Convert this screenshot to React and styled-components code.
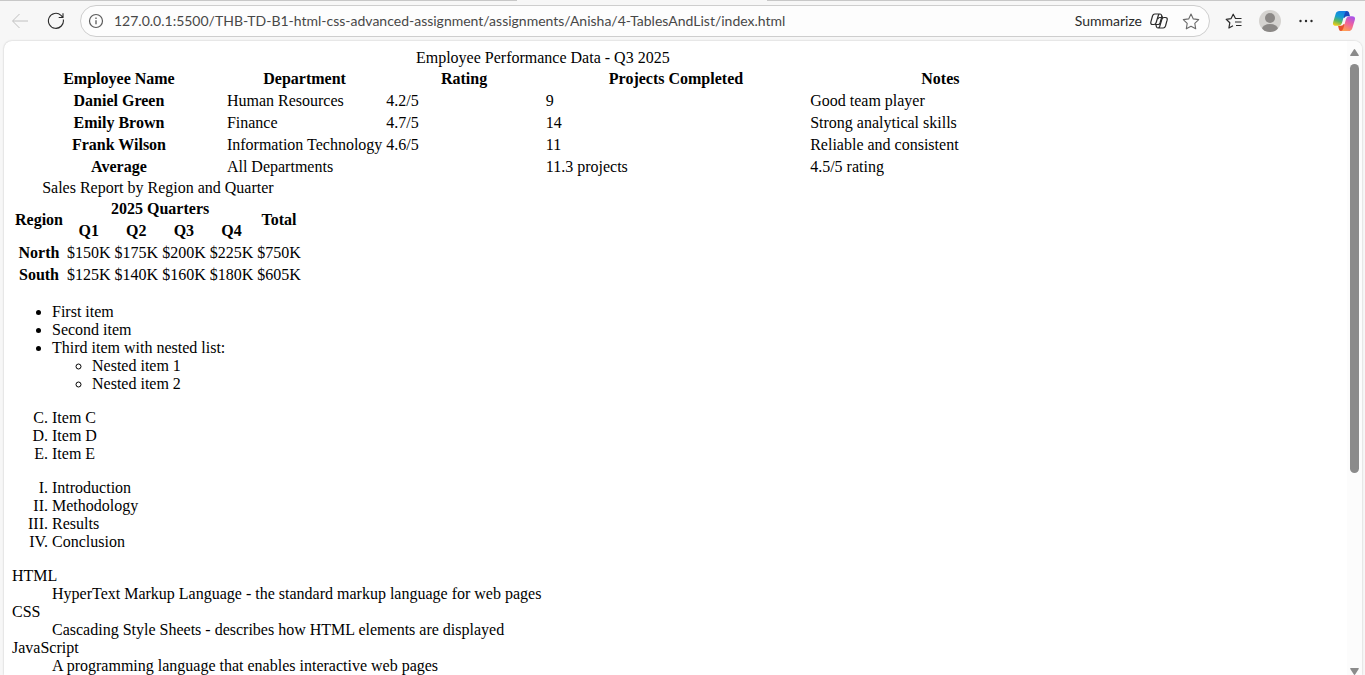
import React from "react";
import styled, { createGlobalStyle } from "styled-components";

const GlobalStyle = createGlobalStyle`
  * { box-sizing: border-box; }
  html, body, #root { height: 100%; }
  body { margin: 0; background: #f7f7f7; overflow: hidden; }
`;

const Browser = styled.div`
  display: flex;
  flex-direction: column;
  height: 100%;
`;

const TabEdge = styled.div`
  display: flex;
  gap: 250px;
  height: 1px;
  flex: none;
`;

const EdgeLine = styled.span`
  flex: ${(p) => p.$grow} 1 0;
  background: #c8c8c8;
`;

const Toolbar = styled.header`
  display: flex;
  align-items: center;
  height: 40px;
  flex: none;
  padding: 0 9px 0 10px;
`;

const IconButton = styled.button`
  display: grid;
  place-items: center;
  flex: none;
  width: ${(p) => p.$width || 20}px;
  height: 24px;
  margin: 0 ${(p) => p.$after || 0}px 0 0;
  padding: 0;
  border: 0;
  background: none;
  color: ${(p) => p.$color || "#2b2b2b"};
  svg { display: block; }
`;

const AddressBar = styled.div`
  display: flex;
  align-items: center;
  flex: 1;
  height: 32px;
  margin-right: 14px;
  padding: 0 8px 0 5px;
  border: 1px solid #cecece;
  border-radius: 16px;
  background: #fdfdfd;
`;

const AddressInput = styled.input`
  flex: 1;
  min-width: 0;
  padding: 0;
  border: 0;
  outline: 0;
  background: none;
  color: #484848;
  font: 14px/20px Lato, "Open Sans", sans-serif;
`;

const SummarizeButton = styled.button`
  display: flex;
  align-items: center;
  gap: 8px;
  margin-right: 13px;
  padding: 0;
  border: 0;
  background: none;
  color: #2b2b2b;
  font: 14px/20px Lato, "Open Sans", sans-serif;
`;

const Viewport = styled.div`
  display: flex;
  flex: 1;
  min-height: 0;
  margin: 0 3px 0 4px;
  border-radius: 8px 8px 0 0;
  background: #fff;
  box-shadow: 0 0 2px rgba(0, 0, 0, 0.24);
  overflow: hidden;
`;

const Page = styled.main`
  flex: 1;
  min-width: 0;
  padding: 8px;
  overflow: hidden;
  color: #000;
  font: 16px/18px "Liberation Serif", "Times New Roman", serif;
`;

const Scrollbar = styled.div`
  display: flex;
  flex-direction: column;
  align-items: center;
  width: 15px;
  flex: none;
  padding: 8px 0 0;
  background: #fcfcfc;
`;

const ScrollTrack = styled.div`
  display: flex;
  flex-direction: column;
  flex: 1;
  width: 9px;
  margin: 8px 0 0;
`;

const ScrollThumb = styled.div`
  flex: 409 1 0;
  border-radius: 5px;
  background: #8b8b8b;
`;

const ScrollRest = styled.div`
  flex: 195 1 0;
`;

const DataTable = styled.table`
  width: ${(p) => p.$width || "auto"};
  border-spacing: 2px;
  th, td { padding: 1px; }
  td { text-align: left; }
`;

const Col = styled.col`
  width: ${(p) => p.$width};
`;

const List = styled.ul`
  margin: ${(p) => (p.$nested ? 0 : 16)}px 0;
  padding-left: 40px;
  list-style-type: ${(p) => p.$marker};
`;

const Definitions = styled.dl`
  margin: 16px 0;
  dd { margin-left: 40px; }
`;

const employees = [
  ["Daniel Green", "Human Resources", "4.2/5", "9", "Good team player"],
  ["Emily Brown", "Finance", "4.7/5", "14", "Strong analytical skills"],
  ["Frank Wilson", "Information Technology", "4.6/5", "11", "Reliable and consistent"],
];

const sales = [
  ["North", "$150K", "$175K", "$200K", "$225K", "$750K"],
  ["South", "$125K", "$140K", "$160K", "$180K", "$605K"],
];

const terms = [
  ["HTML", "HyperText Markup Language - the standard markup language for web pages"],
  ["CSS", "Cascading Style Sheets - describes how HTML elements are displayed"],
  ["JavaScript", "A programming language that enables interactive web pages"],
];

const BackIcon = () => (
  <svg width="18" height="16" viewBox="0 0 18 16" fill="none" stroke="currentColor" strokeWidth="1">
    <path d="M17 8H2M8.500 1L1.500 8l7 7" />
  </svg>
);

const ReloadIcon = () => (
  <svg width="18" height="18" viewBox="0 0 18 18" fill="none" stroke="currentColor" strokeWidth="1.100">
    <path d="M16.300 7.500A7.500 7.500 0 1 1 14 3.300L15.900 5.300M16 1.200v4.300h-4.300" />
  </svg>
);

const InfoIcon = () => (
  <svg width="16" height="16" viewBox="0 0 16 16" fill="none" stroke="currentColor">
    <circle cx="8" cy="8" r="6.500" strokeWidth="1.200" />
    <path d="M8 7.200v4M8 4.600v1.400" strokeWidth="1.300" />
  </svg>
);

const CopilotOutline = () => (
  <svg width="18" height="16" viewBox="0 0 18 16" fill="none" stroke="currentColor" strokeWidth="1.200" strokeLinejoin="round">
    <path d="M4.800 1H10q1.300 0 1.600 1.300l.5 1.700M10 1Q8.800 1 8.300 2.500L6.200 9.500Q5.700 11.500 4 11.500H2.600Q.3 11.500.9 8.800L2.500 3Q3.100 1 4.800 1z" />
    <path d="M13.200 15H8q-1.300 0-1.600-1.300L5.900 11.700M8 15q1.200 0 1.700-1.500l2.100-7q.5-2 2.200-2h1.400q2.300 0 1.700 2.700L15.500 13q-.6 2-2.300 2z" />
    <path d="M13 4.500H9.700Q8.400 4.500 7.900 6M5 11.500h3.300q1.300 0 1.800-1.500M12.100 2.800L10 10" />
  </svg>
);

const StarIcon = () => (
  <svg width="18" height="17" viewBox="0 0 18 17" fill="none" stroke="currentColor" strokeWidth="1.100" strokeLinejoin="round">
    <path d="M9 1l2.300 4.900 5.400.7-3.900 3.800.9 5.400L9 13.200l-4.700 2.600.9-5.400-3.900-3.800 5.400-.7z" />
  </svg>
);

const FavoritesIcon = () => (
  <svg width="18" height="17" viewBox="0 0 18 17" fill="none" stroke="currentColor" strokeWidth="1.200" strokeLinejoin="round">
    <path d="M16.500 5.500h-6L8.200 1.200 6.100 5.600 1.200 6.300l3.600 3.500-.9 5.200 4.100-2.200M10 9h6.500M11 12.500h5.500" />
  </svg>
);

const AvatarIcon = () => (
  <svg width="22" height="22" viewBox="0 0 22 22">
    <defs>
      <clipPath id="avatar-disc"><circle cx="11" cy="11" r="11" /></clipPath>
    </defs>
    <g clipPath="url(#avatar-disc)">
      <rect width="22" height="22" fill="#d5d3d0" />
      <circle cx="11" cy="8" r="5" fill="#8b8886" />
      <ellipse cx="11" cy="19" rx="8" ry="5" fill="#8b8886" />
    </g>
  </svg>
);

const MoreIcon = () => (
  <svg width="14" height="4" viewBox="0 0 14 4" fill="currentColor">
    <circle cx="1.500" cy="2" r="1.200" />
    <circle cx="7" cy="2" r="1.200" />
    <circle cx="12.500" cy="2" r="1.200" />
  </svg>
);

const CopilotLogo = () => (
  <svg width="22" height="20" viewBox="0 0 22 20">
    <defs>
      <linearGradient id="cp-left" x1="0.6" y1="0" x2="0.3" y2="1">
        <stop offset="0" stopColor="#1680e4" />
        <stop offset="0.4" stopColor="#159fd0" />
        <stop offset="0.7" stopColor="#5fb75c" />
        <stop offset="1" stopColor="#f0cc18" />
      </linearGradient>
      <linearGradient id="cp-right" x1="0.8" y1="0" x2="0.3" y2="1">
        <stop offset="0" stopColor="#a552ee" />
        <stop offset="0.5" stopColor="#f0629c" />
        <stop offset="1" stopColor="#ffa052" />
      </linearGradient>
    </defs>
    <path d="M9 0h5q1.500 0 2 1.600L17 5.200h-3Q12 5.200 11.300 7L9 6z" fill="#1848bd" />
    <path d="M13 20H8q-1.500 0-2-1.600L5 14.800h3q2 0 2.700-1.800l2.300 1z" fill="#e8502c" />
    <path d="M6.500 0H14q-1.600.2-2.200 2.200L9.100 11.500Q8.100 14.800 5 14.800H3Q-.8 14.800.2 11L2.700 2.800Q3.500 0 6.500 0z" fill="url(#cp-left)" />
    <path d="M15.500 20H8q1.600-.2 2.200-2.200l2.700-9.300Q13.900 5.200 17 5.200h2q3.800 0 2.800 3.800l-2.500 8.200Q18.500 20 15.500 20z" fill="url(#cp-right)" />
  </svg>
);

const Arrow = ({ down }) => (
  <svg width="9" height="7" viewBox="0 0 9 7" fill="#8b8b8b">
    <path d={down ? "M.8 0h7.400q1.200 0 .5 1L5.300 6.300q-.8 1.200-1.600 0L.3 1Q-.4 0 .8 0z" : "M.8 7h7.400q1.200 0 .5-1L5.300.7q-.8-1.200-1.600 0L.3 6Q-.4 7 .8 7z"} />
  </svg>
);

function EmployeeTable() {
  return (
    <DataTable $width="80%">
      <caption>Employee Performance Data - Q3 2025</caption>
      <colgroup>
        <Col $width="20%" />
        <Col $width="15%" />
        <Col $width="15%" />
        <Col $width="25%" />
        <Col $width="25%" />
      </colgroup>
      <thead>
        <tr>
          {["Employee Name", "Department", "Rating", "Projects Completed", "Notes"].map((h) => (
            <th key={h} scope="col">{h}</th>
          ))}
        </tr>
      </thead>
      <tbody>
        {employees.map(([name, ...cells]) => (
          <tr key={name}>
            <th scope="row">{name}</th>
            {cells.map((c) => <td key={c}>{c}</td>)}
          </tr>
        ))}
      </tbody>
      <tfoot>
        <tr>
          <th scope="row">Average</th>
          <td colSpan={2}>All Departments</td>
          <td>11.3 projects</td>
          <td>4.5/5 rating</td>
        </tr>
      </tfoot>
    </DataTable>
  );
}

function SalesTable() {
  return (
    <DataTable>
      <caption>Sales Report by Region and Quarter</caption>
      <thead>
        <tr>
          <th rowSpan={2} scope="col">Region</th>
          <th colSpan={4} scope="colgroup">2025 Quarters</th>
          <th rowSpan={2} scope="col">Total</th>
        </tr>
        <tr>
          {["Q1", "Q2", "Q3", "Q4"].map((q) => <th key={q} scope="col">{q}</th>)}
        </tr>
      </thead>
      <tbody>
        {sales.map(([region, ...cells]) => (
          <tr key={region}>
            <th scope="row">{region}</th>
            {cells.map((c) => <td key={c}>{c}</td>)}
          </tr>
        ))}
      </tbody>
    </DataTable>
  );
}

export default function App() {
  return (
    <Browser>
      <GlobalStyle />
      <TabEdge>
        <EdgeLine $grow={517} />
        <EdgeLine $grow={598} />
      </TabEdge>
      <Toolbar>
        <IconButton aria-label="Back" $color="#c0c0c0" $after={16}><BackIcon /></IconButton>
        <IconButton aria-label="Refresh" $after={14}><ReloadIcon /></IconButton>
        <AddressBar>
          <IconButton aria-label="Site information" $color="#5a5a5a" $after={8}><InfoIcon /></IconButton>
          <AddressInput
            aria-label="Address"
            readOnly
            value="127.0.0.1:5500/THB-TD-B1-html-css-advanced-assignment/assignments/Anisha/4-TablesAndList/index.html"
          />
          <SummarizeButton>Summarize <CopilotOutline /></SummarizeButton>
          <IconButton aria-label="Add to favorites" $color="#6a6a6a"><StarIcon /></IconButton>
        </AddressBar>
        <IconButton aria-label="Favorites" $after={14}><FavoritesIcon /></IconButton>
        <IconButton aria-label="Profile" $width={24} $after={14}><AvatarIcon /></IconButton>
        <IconButton aria-label="Settings and more" $width={20} $after={16}><MoreIcon /></IconButton>
        <IconButton aria-label="Copilot" $width={24}><CopilotLogo /></IconButton>
      </Toolbar>
      <Viewport>
        <Page>
          <EmployeeTable />
          <SalesTable />
          <List $marker="disc">
            <li>First item</li>
            <li>Second item</li>
            <li>
              Third item with nested list:
              <List $marker="circle" $nested>
                <li>Nested item 1</li>
                <li>Nested item 2</li>
              </List>
            </li>
          </List>
          <List as="ol" $marker="upper-alpha" start={3}>
            <li>Item C</li>
            <li>Item D</li>
            <li>Item E</li>
          </List>
          <List as="ol" $marker="upper-roman">
            <li>Introduction</li>
            <li>Methodology</li>
            <li>Results</li>
            <li>Conclusion</li>
          </List>
          <Definitions>
            {terms.map(([term, text]) => (
              <React.Fragment key={term}>
                <dt>{term}</dt>
                <dd>{text}</dd>
              </React.Fragment>
            ))}
          </Definitions>
        </Page>
        <Scrollbar aria-hidden="true">
          <Arrow />
          <ScrollTrack>
            <ScrollThumb />
            <ScrollRest />
          </ScrollTrack>
          <Arrow down />
        </Scrollbar>
      </Viewport>
    </Browser>
  );
}
